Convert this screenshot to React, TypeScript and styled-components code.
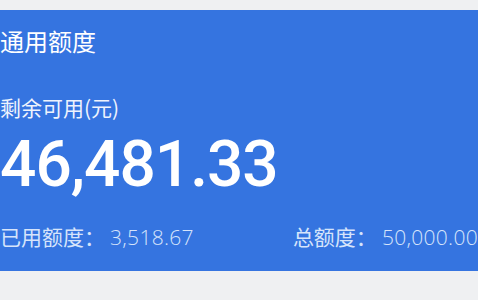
import styled, { createGlobalStyle } from "styled-components";

const GlobalStyle = createGlobalStyle`
  html, body {
    margin: 0;
    padding: 0;
    background: #eff0f2;
  }
  body {
    width: 478px;
    height: 300px;
    overflow: hidden;
    font-family: "Noto Sans CJK SC", "Noto Sans", sans-serif;
  }
`;

const Page = styled.div`
  padding-top: 10px;
`;

const Card = styled.section`
  height: 261px;
  background: #3574e0;
  color: #ffffff;
  display: flex;
  flex-direction: column;
  padding: 0;
  box-sizing: border-box;
  overflow: hidden;
`;

const Title = styled.h2`
  margin: 19px 0 0 0;
  font-size: 24px;
  line-height: 24px;
  font-weight: 400;
  color: #ffffff;
`;

const Label = styled.div`
  margin-top: 44px;
  font-size: 21px;
  line-height: 21px;
  color: #eef3fd;
`;

const Amount = styled.div`
  margin-top: 15px;
  font-family: Roboto, "Liberation Sans", sans-serif;
  font-size: 64px;
  line-height: 64px;
  font-weight: 500;
  letter-spacing: -1px;
`;

const Footer = styled.div`
  margin-top: 29px;
  display: flex;
  justify-content: space-between;
  white-space: nowrap;
  font-size: 21px;
  line-height: 21px;
  color: #d6e4fb;
`;

const Stat = styled.span`
  display: flex;
  align-items: baseline;
`;

const StatValue = styled.span`
  font-family: "Open Sans", "Noto Sans", sans-serif;
  font-weight: 300;
  font-size: 21px;
  letter-spacing: 0.3px;
  margin-left: 5px;
`;

export default function App() {
  return (
    <>
      <GlobalStyle />
      <Page>
        <Card>
          <Title>通用额度</Title>
          <Label>剩余可用(元)</Label>
          <Amount>46,481.33</Amount>
          <Footer>
            <Stat>
              已用额度：<StatValue>3,518.67</StatValue>
            </Stat>
            <Stat>
              总额度：<StatValue>50,000.00</StatValue>
            </Stat>
          </Footer>
        </Card>
      </Page>
    </>
  );
}
